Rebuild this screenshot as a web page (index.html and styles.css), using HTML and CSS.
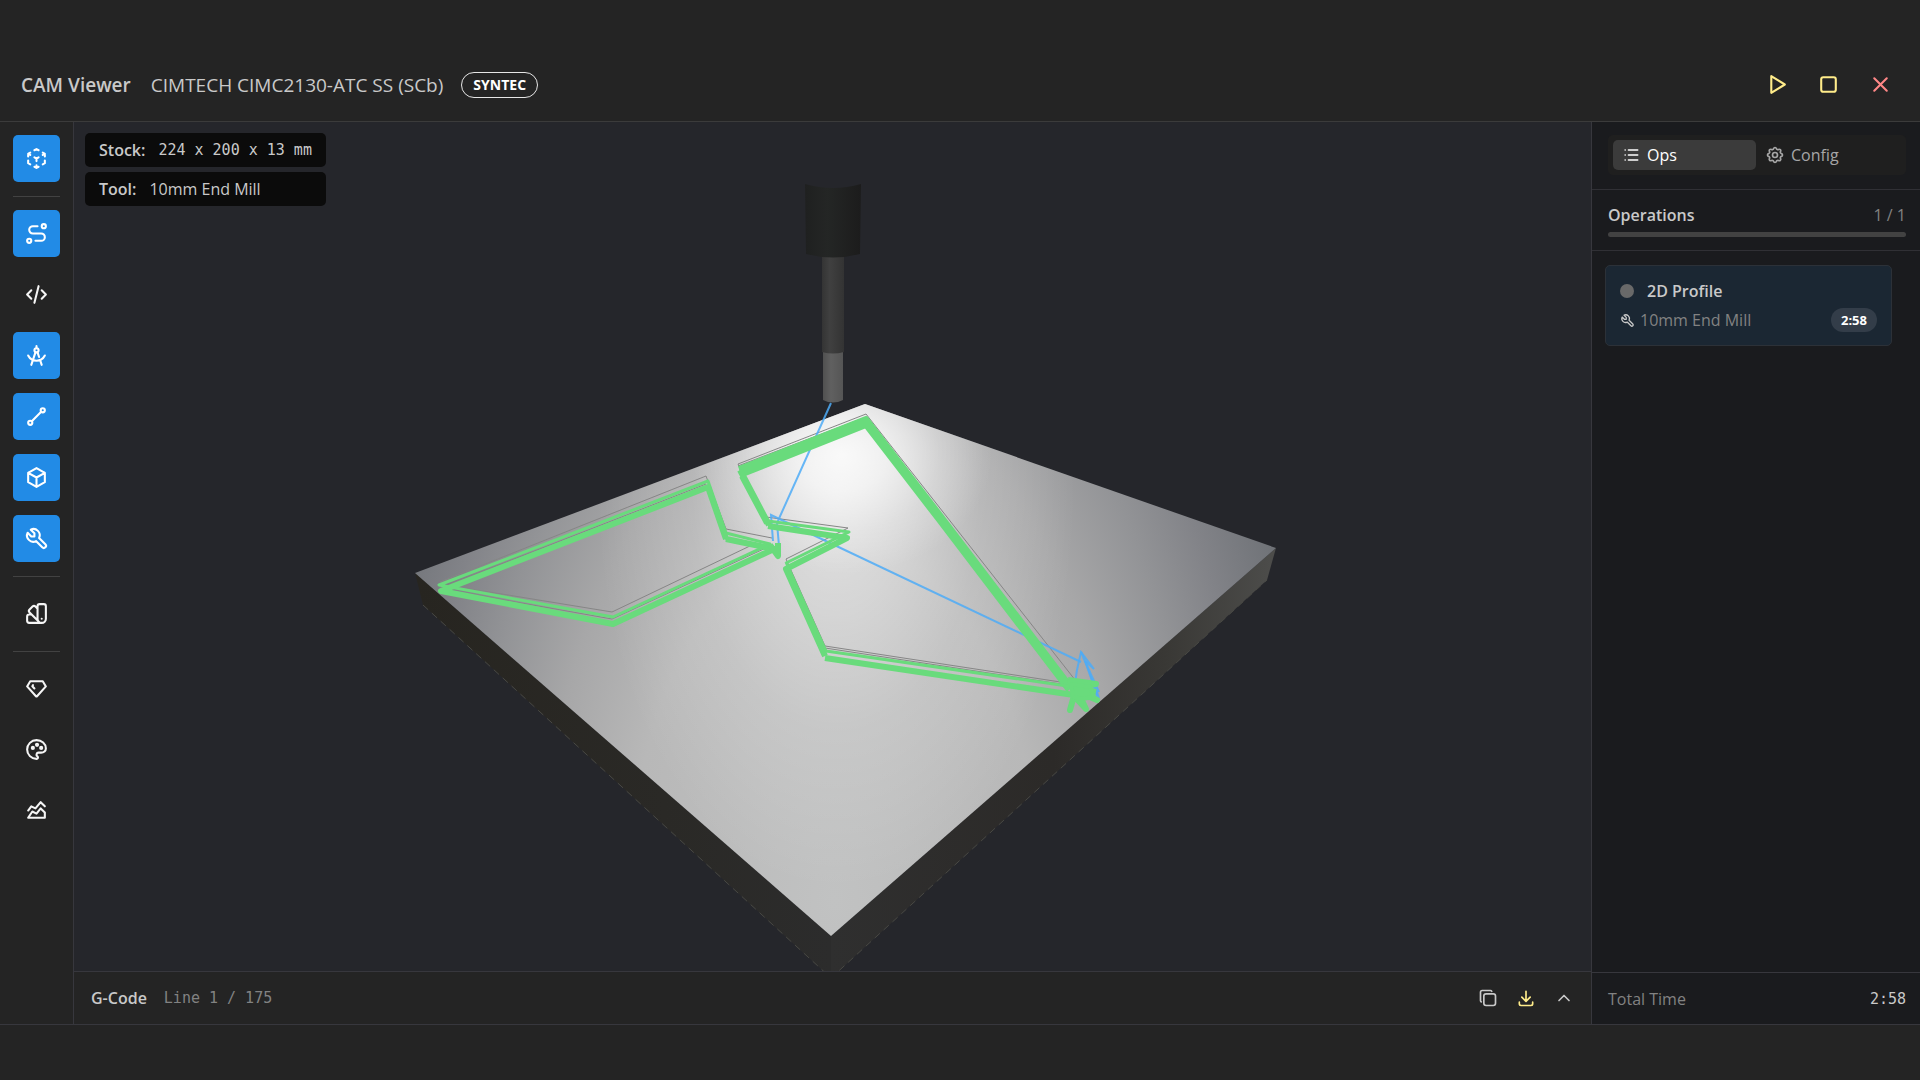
FILE: index.html
```html
<!DOCTYPE html>
<html lang="en">
<head>
<meta charset="utf-8">
<title>CAM Viewer</title>
<link rel="stylesheet" href="styles.css">
</head>
<body>
<div class="app">
  <header class="header">
    <h1 class="title">CAM Viewer</h1>
    <span class="machine">CIMTECH CIMC2130-ATC SS (SCb)</span>
    <span class="controller">SYNTEC</span>
    <div class="window-actions">
      <button class="icon-button yellow" aria-label="Play"><svg class="icon" viewBox="0 0 24 24"><path d="M7 4v16l13-8z"/></svg></button>
      <button class="icon-button yellow" aria-label="Stop"><svg class="icon" viewBox="0 0 24 24"><rect x="5" y="5" width="14" height="14" rx="2"/></svg></button>
      <button class="icon-button red" aria-label="Close"><svg class="icon" viewBox="0 0 24 24"><path d="M18 6L6 18M6 6l12 12"/></svg></button>
    </div>
  </header>

  <div class="workspace">
    <nav class="toolbar" aria-label="View tools">
      <div class="tool-group">
        <button class="tool active" aria-label="Isometric view"><svg class="icon" viewBox="0 0 24 24"><path d="M6 17.6l-2-1.1v-2.5M4 10v-2.5l2-1.1M10 4.1l2-1.1l2 1.1M18 6.4l2 1.1v2.5M20 14v2.5l-2 1.12M14 19.9l-2 1.1l-2-1.1M12 12l2-1.1M18 8.6l2-1.1M12 12v2.5M12 18.5v2.5M12 12l-2-1.12M6 8.6l-2-1.1"/></svg></button>
      </div>
      <div class="tool-group">
        <button class="tool active" aria-label="Toolpath"><svg class="icon" viewBox="0 0 24 24"><circle cx="5" cy="19" r="2"/><circle cx="19" cy="5" r="2"/><path d="M11 19h5.5a3.5 3.5 0 0 0 0-7h-8a3.5 3.5 0 0 1 0-7h4.5"/></svg></button>
        <button class="tool" aria-label="Code"><svg class="icon" viewBox="0 0 24 24"><path d="M7 8l-4 4l4 4M17 8l4 4l-4 4M14 4l-4 16"/></svg></button>
        <button class="tool active" aria-label="Geometry"><svg class="icon" viewBox="0 0 24 24"><path d="M7 21l4-12m2 0l1.48 4.439m.949 2.847l1.571 4.714"/><circle cx="12" cy="7" r="2"/><path d="M4 12c1.526 2.955 4.588 5 8 5c3.41 0 6.473-2.048 8-5M12 5v-2"/></svg></button>
        <button class="tool active" aria-label="Lines"><svg class="icon" viewBox="0 0 24 24"><circle cx="6" cy="18" r="2"/><circle cx="18" cy="6" r="2"/><path d="M7.5 16.5l9-9"/></svg></button>
        <button class="tool active" aria-label="Stock"><svg class="icon" viewBox="0 0 24 24"><path d="M12 3l8 4.5v9l-8 4.5l-8-4.5v-9zM12 12l8-4.5M12 12v9M12 12l-8-4.5"/></svg></button>
        <button class="tool active" aria-label="Tool"><svg class="icon" viewBox="0 0 24 24"><path d="M7 10h3v-3l-3.5-3.5a6 6 0 0 1 8 8l6 6a2 2 0 0 1-3 3l-6-6a6 6 0 0 1-8-8z"/></svg></button>
      </div>
      <div class="tool-group">
        <button class="tool" aria-label="Material"><svg class="icon" viewBox="0 0 24 24"><path d="M19 3h-4a2 2 0 0 0-2 2v12a4 4 0 0 0 8 0v-12a2 2 0 0 0-2-2M13 7.35l-2-2a2 2 0 0 0-2.828 0l-2.828 2.828a2 2 0 0 0 0 2.828l9 9M7.3 13h-2.3a2 2 0 0 0-2 2v4a2 2 0 0 0 2 2h12M17 17v.01"/></svg></button>
      </div>
      <div class="tool-group">
        <button class="tool" aria-label="Quality"><svg class="icon" viewBox="0 0 24 24"><path d="M6 5h12l3 5l-8.5 9.5a.7.7 0 0 1-1 0l-8.5-9.5zM10 12l-2-2.2l.6-1"/></svg></button>
        <button class="tool" aria-label="Colors"><svg class="icon" viewBox="0 0 24 24"><path d="M12 21a9 9 0 0 1 0-18c4.97 0 9 3.582 9 8c0 1.06-.474 2.078-1.318 2.828c-.844.75-1.989 1.172-3.182 1.172h-2.5a2 2 0 0 0-1 3.75a1.3 1.3 0 0 1-1 2.25"/><circle cx="8.5" cy="10.5" r="1"/><circle cx="12.5" cy="7.5" r="1"/><circle cx="16.5" cy="10.5" r="1"/></svg></button>
        <button class="tool" aria-label="Statistics"><svg class="icon" viewBox="0 0 24 24"><path d="M4 19l4-6l4 2l4-5l4 4v5zM4 12l3-4l4 2l5-6l4 4"/></svg></button>
      </div>
    </nav>

    <main class="viewer">
      <div class="scene">
        <svg class="canvas" viewBox="74 122 1517 849" preserveAspectRatio="xMidYMid slice" role="img" aria-label="Stock and toolpath">
          <defs>
            <radialGradient id="face" gradientUnits="userSpaceOnUse" cx="0" cy="0" r="1" gradientTransform="translate(835 900) scale(480 840)">
              <stop offset="0" stop-color="#c1c2c2"/>
              <stop offset=".43" stop-color="#b8b8b8"/>
              <stop offset=".61" stop-color="#a7a7a8"/>
              <stop offset=".76" stop-color="#929396"/>
              <stop offset=".87" stop-color="#828388"/>
              <stop offset="1" stop-color="#707378"/>
            </radialGradient>
            <radialGradient id="shine" gradientUnits="userSpaceOnUse" cx="0" cy="0" r="1" gradientTransform="translate(836 490) scale(240 400)">
              <stop offset="0" stop-color="#fff" stop-opacity=".6"/>
              <stop offset=".3" stop-color="#fff" stop-opacity=".4"/>
              <stop offset=".6" stop-color="#fff" stop-opacity=".16"/>
              <stop offset="1" stop-color="#fff" stop-opacity="0"/>
            </radialGradient>
            <radialGradient id="hotspot" gradientUnits="userSpaceOnUse" cx="0" cy="0" r="1" gradientTransform="translate(842 455) scale(150 120)">
              <stop offset="0" stop-color="#fff" stop-opacity=".85"/>
              <stop offset=".3" stop-color="#fff" stop-opacity=".65"/>
              <stop offset=".65" stop-color="#fff" stop-opacity=".25"/>
              <stop offset="1" stop-color="#fff" stop-opacity="0"/>
            </radialGradient>
            <linearGradient id="left-side"><stop offset="0" stop-color="#272520"/><stop offset=".6" stop-color="#2a2926"/><stop offset="1" stop-color="#2c2c2c"/></linearGradient>
            <linearGradient id="right-side"><stop offset="0" stop-color="#2f2f2f"/><stop offset=".5" stop-color="#2c2a28"/><stop offset=".75" stop-color="#393835"/><stop offset="1" stop-color="#4d4d4b"/></linearGradient>
            <linearGradient id="holder"><stop offset="0" stop-color="#1f2020"/><stop offset=".4" stop-color="#242625"/><stop offset="1" stop-color="#1c1c1c"/></linearGradient>
            <linearGradient id="shank"><stop offset="0" stop-color="#343434"/><stop offset=".35" stop-color="#404040"/><stop offset="1" stop-color="#333"/></linearGradient>
            <linearGradient id="cutter"><stop offset="0" stop-color="#505050"/><stop offset=".4" stop-color="#606060"/><stop offset="1" stop-color="#555"/></linearGradient>
          </defs>
          <path fill="url(#left-side)" d="M415 573L831 936V978L423 605z"/>
          <path fill="url(#right-side)" d="M1276 548L831 936V978L1267 580z"/>
          <path class="edge" d="M423 605L831 978L1267 580"/>
          <path fill="url(#face)" d="M415 573L865 404L1276 548L831 936z"/>
          <path fill="url(#shine)" d="M415 573L865 404L1276 548L831 936z"/>
          <path fill="url(#hotspot)" d="M415 573L865 404L1276 548L831 936z"/>

          <g class="outline">
            <path d="M440 582L706 476L726 529L772 538M752 545L612 612L465 588"/>
            <path d="M766 517L738 464L866 414L1083 690M738 466L866 417"/>
            <path d="M766 517L848 528L786 559L825 646L1067 683M825 648L1067 685"/>
            <path d="M440 588L706 484M465 593L612 619L768 547"/>
          </g>
          <g class="rapid">
            <path d="M831 403L777 523L779 546M773 541L771 515L1081 662"/>
            <path d="M1074 690L1077 670L1081 652L1094 669L1085 661L1097 695"/>
            <path d="M1081 652L1090 672L1098 700M1083 657L1099 692M1085 660L1099 698"/>
          </g>
          <g class="cut">
            <path class="thin" d="M726 533L708 481L439 585L613 617L770 544L726 533"/>
            <path class="wide" d="M726 539L708 487L441 591L613 624L774 549L726 539"/>
            <path class="thin" d="M722 525L727 540"/>
            <path class="wide" d="M770 545L778 556V543"/>
            <path class="wide" d="M739 469L866 419L943 519L1070 686M740 472L866 422M740 475L866 425L940 521L1069 690"/>
            <path class="wide" d="M740 470L769 525M742 476L767 523"/>
            <path class="thin" d="M768 521L849 532L786 563"/>
            <path class="wide" d="M768 526L847 538L786 569L825 656"/>
            <path class="thin" d="M786 562L826 651L1074 687"/>
            <path class="wide" d="M825 658L1074 695"/>
            <path class="wide" d="M1068 680L1096 684L1074 688L1097 700L1078 692L1086 709L1074 696L1070 710L1076 688L1096 692"/>
            <path d="M1071 684L1090 687L1094 697L1082 699L1073 697z"/>
          </g>

          <path fill="url(#cutter)" d="M823 350H843V400Q833 405 823 400z"/>
          <path fill="url(#shank)" d="M822 252H844V352Q833 355 822 352z"/>
          <path fill="url(#holder)" d="M805 184Q833 192 861 184L860 254Q833 261 806 254z"/>
        </svg>
        <div class="overlay">
          <div class="info"><strong>Stock:</strong><span class="mono">224 x 200 x 13 mm</span></div>
          <div class="info"><strong>Tool:</strong><span>10mm End Mill</span></div>
        </div>
      </div>
      <footer class="gcode">
        <strong>G-Code</strong>
        <span class="mono line">Line 1 / 175</span>
        <div class="gcode-actions">
          <button class="icon-button" aria-label="Copy"><svg class="icon small" viewBox="0 0 24 24"><rect x="7" y="7" width="14" height="14" rx="2.667"/><path d="M4.012 16.737a2.005 2.005 0 0 1-1.012-1.737v-10c0-1.1.9-2 2-2h10c.75 0 1.158.385 1.5 1"/></svg></button>
          <button class="icon-button yellow" aria-label="Download"><svg class="icon small" viewBox="0 0 24 24"><path d="M4 17v2a2 2 0 0 0 2 2h12a2 2 0 0 0 2-2v-2M7 11l5 5l5-5M12 4v12"/></svg></button>
          <button class="icon-button" aria-label="Expand"><svg class="icon small" viewBox="0 0 24 24"><path d="M6 15l6-6l6 6"/></svg></button>
        </div>
      </footer>
    </main>

    <aside class="panel">
      <div class="tabs-row">
        <div class="tabs" role="tablist">
          <button class="tab selected" role="tab" aria-selected="true"><svg class="icon small" viewBox="0 0 24 24"><path d="M9 6h11M9 12h11M9 18h11M5 6v.01M5 12v.01M5 18v.01"/></svg>Ops</button>
          <button class="tab" role="tab" aria-selected="false"><svg class="icon small" viewBox="0 0 24 24"><path d="M10.325 4.317c.426-1.756 2.924-1.756 3.35 0a1.724 1.724 0 0 0 2.573 1.066c1.543-.94 3.31.826 2.37 2.37a1.724 1.724 0 0 0 1.065 2.572c1.756.426 1.756 2.924 0 3.35a1.724 1.724 0 0 0-1.066 2.573c.94 1.543-.826 3.31-2.37 2.37a1.724 1.724 0 0 0-2.572 1.065c-.426 1.756-2.924 1.756-3.35 0a1.724 1.724 0 0 0-2.573-1.066c-1.543.94-3.31-.826-2.37-2.37a1.724 1.724 0 0 0-1.065-2.572c-1.756-.426-1.756-2.924 0-3.35a1.724 1.724 0 0 0 1.066-2.573c-.94-1.543.826-3.31 2.37-2.37c1 .608 2.296.07 2.572-1.065z"/><circle cx="12" cy="12" r="3"/></svg>Config</button>
        </div>
      </div>
      <section class="summary">
        <div class="summary-row"><strong>Operations</strong><span class="dim">1 / 1</span></div>
        <div class="progress"></div>
      </section>
      <section class="operations">
        <article class="operation">
          <div class="operation-name"><span class="dot"></span><strong>2D Profile</strong></div>
          <div class="operation-tool">
            <svg class="icon tiny" viewBox="0 0 24 24"><path d="M7 10h3v-3l-3.5-3.5a6 6 0 0 1 8 8l6 6a2 2 0 0 1-3 3l-6-6a6 6 0 0 1-8-8z"/></svg>
            <span class="dim">10mm End Mill</span>
            <span class="time">2:58</span>
          </div>
        </article>
      </section>
      <footer class="total"><span class="dim">Total Time</span><span class="mono">2:58</span></footer>
    </aside>
  </div>
</div>
</body>
</html>
```
FILE: styles.css
```css
* { box-sizing: border-box; }

body {
  margin: 0;
  background: #242424;
  color: #c9c9c9;
  font: 16px/24px "Open Sans", "Noto Sans", sans-serif;
}

button {
  border: 0;
  padding: 0;
  background: none;
  color: inherit;
  font: inherit;
}

strong { font-weight: 600; }

.mono { font-family: "DejaVu Sans Mono", monospace; font-size: 15px; }
.dim { color: #828282; }
.yellow { color: #ffec8a; }
.red { color: #ff8787; }

.icon {
  flex: none;
  display: block;
  width: 25px;
  height: 25px;
  fill: none;
  stroke: currentColor;
  stroke-width: 2;
  stroke-linecap: round;
  stroke-linejoin: round;
}
.icon.small { width: 20px; height: 20px; }
.icon.tiny { width: 15px; height: 15px; }

.icon-button {
  display: grid;
  place-items: center;
  width: 34px;
  height: 34px;
}

.app {
  display: flex;
  flex-direction: column;
  min-height: 100vh;
  padding: 48px 0 55px;
}

.header {
  display: flex;
  align-items: center;
  height: 74px;
  padding: 0 23px 0 21px;
  border-bottom: 1px solid #3b3b3b;
}
.title { margin: 0; font-size: 19px; font-weight: 600; }
.machine { margin-left: 20px; font-size: 19px; }
.controller {
  margin-left: 18px;
  padding: 0 11px;
  border: 1px solid #e6e6e6;
  border-radius: 13px;
  color: #fff;
  font-size: 14px;
  font-weight: 700;
}
.window-actions { display: flex; gap: 18px; margin-left: auto; }

.workspace {
  flex: 1;
  display: grid;
  grid-template-columns: 74px minmax(0, 1fr) 329px;
  border-bottom: 1px solid #37373d;
}

.toolbar { padding: 13px; border-right: 1px solid #37373d; }
.tool-group { display: grid; gap: 14px; }
.tool-group + .tool-group {
  margin-top: 14px;
  padding-top: 13px;
  border-top: 1px solid #424242;
}
.tool {
  display: grid;
  place-items: center;
  height: 47px;
  border-radius: 5px;
  color: #f5f5f5;
}
.tool.active { background: #228be6; color: #fff; }

.viewer { display: flex; flex-direction: column; }
.scene { position: relative; flex: 1; background: #25262b; }
.canvas { position: absolute; inset: 0; width: 100%; height: 100%; }
.edge { fill: none; stroke: #484843; stroke-width: 1; stroke-dasharray: 7 5; }
.outline path { fill: none; stroke: #868686; stroke-width: 1; }
.rapid path { fill: none; stroke: #4dabf7; stroke-width: 2; stroke-opacity: .85; }
.cut path { fill: none; stroke: #69db7c; stroke-width: 4; stroke-linejoin: round; }
.cut .thin { stroke-width: 3; }
.cut .wide { stroke-width: 6; }

.overlay {
  position: absolute;
  top: 11px;
  left: 11px;
  display: grid;
  gap: 5px;
}
.info {
  display: flex;
  align-items: center;
  gap: 13px;
  height: 34px;
  padding: 0 14px;
  border-radius: 5px;
  background: #0b0b0b;
}

.gcode {
  display: flex;
  align-items: center;
  gap: 17px;
  height: 53px;
  padding: 0 10px 0 17px;
  border-top: 1px solid #37373d;
}
.line { color: #828282; }
.gcode-actions { display: flex; gap: 4px; margin-left: auto; }

.panel {
  display: flex;
  flex-direction: column;
  border-left: 1px solid #37373d;
  background: #1a1b1e;
}
.tabs-row { padding: 13px 14px 14px 16px; border-bottom: 1px solid #303035; }
.tabs {
  display: grid;
  grid-template-columns: 143px 143px;
  gap: 1px;
  padding: 5px;
  border-radius: 5px;
  background: #1f1f1f;
}
.tab {
  display: flex;
  align-items: center;
  gap: 6px;
  height: 30px;
  padding: 0 8px;
  border-radius: 5px;
  color: #a6a6a6;
}
.tab.selected { background: #3b3b3b; color: #fff; }
.summary { padding: 13px 14px 13px 16px; border-bottom: 1px solid #303035; }
.summary-row { display: flex; justify-content: space-between; }
.progress { height: 5px; margin-top: 5px; border-radius: 3px; background: #424242; }
.operations { flex: 1; padding: 14px 28px 14px 13px; }
.operation {
  padding: 13px 14px;
  border: 1px solid #2c3138;
  border-radius: 5px;
  background: #1b2733;
}
.operation-name, .operation-tool { display: flex; align-items: center; }
.operation-name { gap: 13px; }
.operation-tool { gap: 5px; margin-top: 5px; }
.dot { width: 14px; height: 14px; border-radius: 50%; background: #696969; }
.time {
  margin-left: auto;
  padding: 0 10px;
  border-radius: 12px;
  background: #333d49;
  color: #fff;
  font-size: 13px;
  font-weight: 700;
}
.total {
  display: flex;
  align-items: center;
  justify-content: space-between;
  height: 52px;
  padding: 0 14px 0 16px;
  border-top: 1px solid #37373d;
}
```
